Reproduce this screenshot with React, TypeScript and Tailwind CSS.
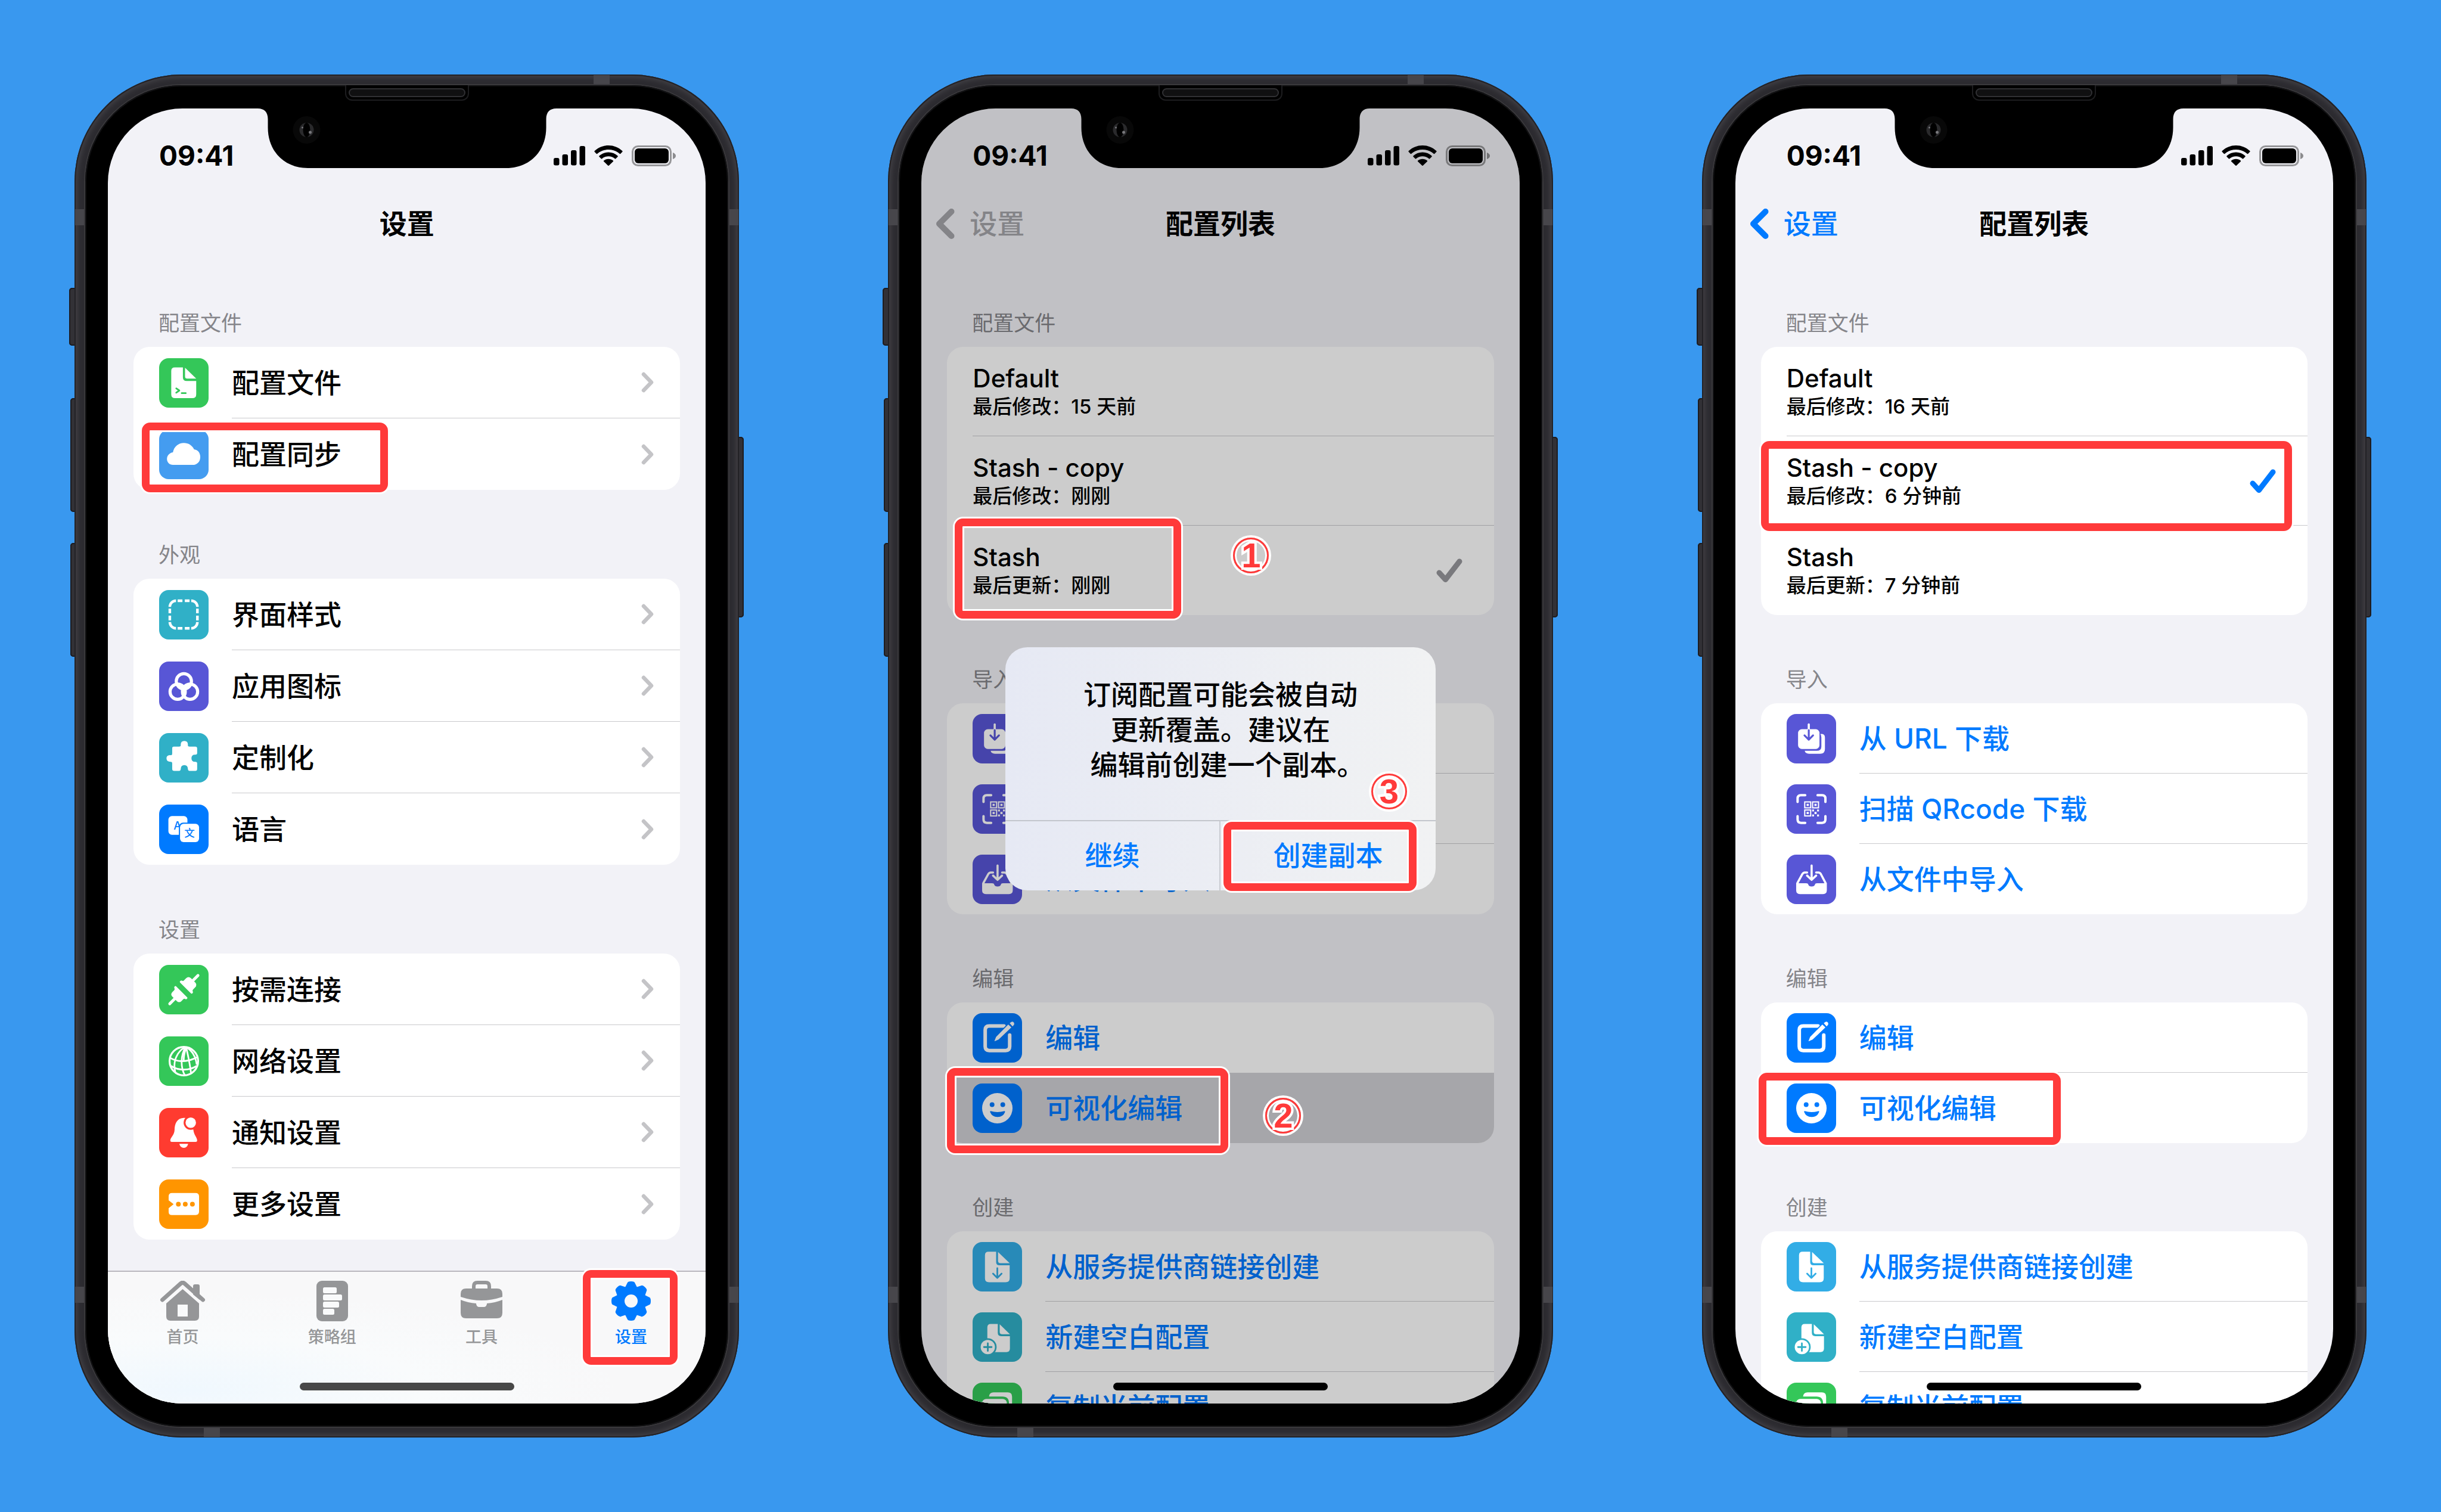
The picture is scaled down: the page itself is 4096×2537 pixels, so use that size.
import type { ReactNode } from "react";

/* ---------- glyphs drawn inside the rounded 208-unit tiles ---------- */

const glyphs: Record<string, ReactNode> = {
  file: (
    <>
      <path fill="#fff" d="M66 39H100V80Q100 96 116 96H156V152Q156 168 140 168H67Q51 168 51 152V54Q51 39 66 39Z" />
      <path fill="#fff" d="M109 40L156 86H118Q109 86 109 77Z" />
      <path stroke="#34c759" strokeWidth="7" strokeLinecap="round" strokeLinejoin="round" fill="none" d="M72 127L85 136L72 145M95 147H112" />
    </>
  ),
  cloud: (
    <path fill="#fff" d="M58 148C44 148 33 138 33 123C33 108 44 97 58 95C63 71 81 56 104 56C123 56 139 66 147 83C163 85 173 97 173 115C173 135 159 148 141 148Z" />
  ),
  dashed: (
    <path
      fill="none"
      stroke="#fff"
      strokeWidth="11"
      d="M45 71A26 26 0 0 1 71 45M135 45A26 26 0 0 1 161 71M161 135A26 26 0 0 1 135 161M71 161A26 26 0 0 1 45 135M78 45H98M108 45H128M78 161H98M108 161H128M45 78V98M45 108V128M161 78V98M161 108V128"
    />
  ),
  rings: (
    <g fill="none" stroke="#fff" strokeWidth="13">
      <circle cx="104" cy="83" r="32" />
      <circle cx="78" cy="127" r="32" />
      <circle cx="130" cy="127" r="32" />
    </g>
  ),
  puzzle: (
    <path
      fill="#fff"
      d="M62 57H84Q92 57 91 50Q90 33 106 33Q122 33 121 50Q120 57 128 57H152Q160 57 160 65V84Q160 91 153 91Q136 90 136 106Q136 122 153 121Q160 121 160 128V151Q160 159 152 159H128Q122 159 121 151Q120 135 106 135Q92 135 91 151Q90 159 84 159H64Q55 159 55 151V128Q55 120 48 121Q31 121 31 106Q31 93 48 93Q55 94 55 86V64Q55 57 62 57Z"
    />
  ),
  translate: (
    <>
      <rect x="39" y="48" width="80" height="79" rx="15" fill="#fff" />
      <text x="77" y="104" textAnchor="middle" fontSize="46" fontWeight="500" fill="#007aff" fontFamily="Inter, sans-serif">A</text>
      <rect x="83" y="76" width="90" height="87" rx="18" fill="#007aff" />
      <rect x="88" y="81" width="80" height="77" rx="15" fill="#fff" />
      <text x="128" y="136" textAnchor="middle" fontSize="44" fontWeight="500" fill="#007aff" fontFamily="'Noto Sans CJK SC', sans-serif">文</text>
    </>
  ),
  plug: (
    <g fill="#fff" transform="translate(104 104) rotate(-45)">
      <path d="M12 -36Q19 -38 21 -32Q22 -27 28 -27H40Q55 -27 55 -12V-6H84A6 6 0 0 1 84 6H55V12Q55 27 40 27H28Q22 27 21 32Q19 38 12 36Q10 35 10 32V-32Q10 -35 12 -36Z" />
      <path d="M-15 -36Q-22 -38 -24 -32Q-25 -27 -31 -27H-41Q-55 -27 -55 -12V-6H-84A6 6 0 0 0 -84 6H-55V12Q-55 27 -41 27H-31Q-25 27 -24 32Q-22 38 -15 36Q-13 35 -13 32V-32Q-13 -35 -15 -36Z" />
    </g>
  ),
  globe: (
    <g fill="none" stroke="#fff" strokeWidth="8">
      <circle cx="104" cy="104" r="60" />
      <path d="M108 46C76 64 56 104 68 150M110 46C90 84 90 130 108 163M114 46C122 84 130 116 134 154M114 46C106 70 102 90 104 104M118 47C140 62 154 84 158 118" strokeWidth="7" />
      <path d="M46 90C72 106 112 112 160 88M50 124C80 144 124 146 158 124" strokeWidth="7" />
    </g>
  ),
  bell: (
    <>
      <path fill="#fff" d="M102 42C74 44 65 68 65 92C64 116 47 124 47 137Q47 143 53 143H154Q160 143 160 137C160 124 146 114 144 92C143 66 134 40 102 42Z" />
      <circle cx="133" cy="62" r="30" fill="#ff3b30" />
      <circle cx="133" cy="62" r="22" fill="#fff" />
      <path fill="#fff" d="M85 151H122Q118 168 104 168Q89 168 85 151Z" />
    </>
  ),
  ticket: (
    <>
      <path fill="#fff" d="M54 57H153Q168 57 168 72V135Q168 150 153 150H54Q40 150 40 136V121L61 104L40 88V72Q40 57 54 57Z" />
      <g fill="#ff9500">
        <circle cx="81" cy="104" r="10" />
        <circle cx="110" cy="104" r="10" />
        <circle cx="140" cy="104" r="10" />
      </g>
    </>
  ),
  download: (
    <>
      <path fill="#fff" d="M142 84H146Q161 84 161 99V147Q161 167 141 167H94Q78 167 76 155H126Q146 155 146 137V99Q146 90 142 84Z" />
      <rect x="48" y="64" width="90" height="83" rx="16" fill="#fff" />
      <path stroke="#fff" strokeWidth="9" strokeLinecap="round" d="M93 44V66" />
      <path stroke="#5856d6" strokeWidth="8" strokeLinecap="round" strokeLinejoin="round" fill="none" d="M93 68V107M75 90L93 108L111 90" />
    </>
  ),
  qr: (
    <>
      <path fill="none" stroke="#fff" strokeWidth="10" strokeLinecap="round" d="M46 74V60Q46 46 60 46H78M130 46H149Q163 46 163 60V74M163 134V148Q163 162 149 162H130M78 162H60Q46 162 46 148V134" />
      <g fill="none" stroke="#fff" strokeWidth="5">
        <rect x="76" y="74" width="25" height="25" />
        <rect x="109" y="74" width="25" height="25" />
        <rect x="76" y="108" width="25" height="25" />
      </g>
      <g fill="#fff">
        <rect x="84" y="82" width="9" height="9" />
        <rect x="117" y="82" width="9" height="9" />
        <rect x="84" y="116" width="9" height="9" />
        <rect x="107" y="106" width="8" height="8" />
        <rect x="128" y="106" width="8" height="8" />
        <rect x="117" y="116" width="9" height="9" />
        <rect x="107" y="127" width="8" height="8" />
        <rect x="128" y="127" width="8" height="8" />
      </g>
    </>
  ),
  inbox: (
    <>
      <path fill="#fff" d="M40 120H82Q90 120 91 126Q94 134 105 134Q116 134 119 126Q120 120 128 120H169V150Q169 166 153 166H56Q40 166 40 150Z" />
      <path fill="none" stroke="#fff" strokeWidth="9" strokeLinecap="round" strokeLinejoin="round" d="M86 75H76Q70 75 66 82L45 120M124 75H134Q140 75 144 82L164 120M105 46V104M86 88L105 106L124 88" />
    </>
  ),
  edit: (
    <>
      <path fill="none" stroke="#fff" strokeWidth="15" strokeLinecap="round" d="M132 54H70Q53 54 53 71V140Q53 157 70 157H139Q156 157 156 140V92" />
      <path fill="#fff" stroke="#007aff" strokeWidth="4" d="M150 45L166 60L110 113L88 122L97 99Z" />
      <path fill="#fff" d="M156 42L163 37Q168 34 173 39Q177 44 174 49L168 56Z" />
    </>
  ),
  smile: (
    <>
      <circle cx="104" cy="104" r="64" fill="#fff" />
      <circle cx="82" cy="89" r="10" fill="#007aff" />
      <circle cx="127" cy="89" r="10" fill="#007aff" />
      <path fill="#007aff" d="M76 116Q104 124 134 116Q138 116 136 121Q128 141 105 141Q82 141 74 121Q72 116 76 116Z" />
    </>
  ),
  docDown: (
    <>
      <path fill="#fff" d="M67 41H99V84Q99 98 113 98H156V152Q156 169 139 169H69Q52 169 52 152V56Q52 41 67 41Z" />
      <path fill="#fff" d="M107 42L156 89H117Q107 89 107 79Z" />
      <path fill="none" stroke="#32ade6" strokeWidth="7" strokeLinecap="round" strokeLinejoin="round" d="M104 110V150M86 133L104 151L122 133" />
    </>
  ),
  docPlus: (
    <>
      <path fill="#fff" d="M76 49H106V86Q106 100 120 100H157V152Q157 167 142 167H76Q62 167 62 152V63Q62 49 76 49Z" />
      <path fill="#fff" d="M114 50L157 92H123Q114 92 114 83Z" />
      <circle cx="64" cy="146" r="37" fill="#30b0c7" />
      <circle cx="64" cy="146" r="30" fill="#fff" />
      <path stroke="#30b0c7" strokeWidth="7" strokeLinecap="round" d="M64 130V162M48 146H80" />
    </>
  ),
  copy: (
    <>
      <path fill="#fff" d="M69 58Q71 41 88 41H148Q166 41 166 59V125Q166 140 153 143V86Q153 58 125 58Z" />
      <rect x="40" y="68" width="104" height="100" rx="18" fill="#fff" />
    </>
  ),
};

const tiles: Record<string, string> = {
  green: "bg-[#34c759]",
  sky: "bg-[#449cf0]",
  teal: "bg-[#30b0c7]",
  indigo: "bg-[#5856d6]",
  blue: "bg-[#007aff]",
  red: "bg-[#ff3b30]",
  orange: "bg-[#ff9500]",
  cyan: "bg-[#32ade6]",
};

function Tile({ glyph, color }: { glyph: string; color: string }) {
  return (
    <span className={"block size-[83px] shrink-0 overflow-hidden rounded-[16px] " + tiles[color]}>
      <svg viewBox="0 0 208 208" className="size-full" aria-hidden="true">
        {glyphs[glyph]}
      </svg>
    </span>
  );
}

/* ---------- call-outs ---------- */

function Mark({ place }: { place: string }) {
  return (
    <span
      aria-hidden="true"
      className={
        "pointer-events-none absolute z-30 rounded-[14px] border-[13px] border-[#ff3a3a] shadow-[0_0_0_3px_#fff,inset_0_0_0_3px_#fff] " +
        place
      }
    />
  );
}

function Step({ n, place }: { n: number; place: string }) {
  return (
    <span
      className={
        "absolute z-30 flex size-[60px] items-center justify-center rounded-full border-[3px] border-[#ff3a3a] text-[58px] leading-none font-bold text-[#ff3a3a] shadow-[0_0_0_4px_#fff,inset_0_0_0_3px_#fff] [-webkit-text-stroke:8px_#fff] [paint-order:stroke_fill] font-['Liberation_Sans',sans-serif] " +
        place
      }
    >
      {n}
    </span>
  );
}

/* ---------- lists ---------- */

function Section({ title, children }: { title: string; children: ReactNode }) {
  return (
    <section>
      <h2 className="px-[42px] pb-[18px] text-[35px] leading-[44px] text-[#85858a]">{title}</h2>
      <ul className="rounded-[27px] bg-white">{children}</ul>
    </section>
  );
}

type RowProps = {
  glyph: string;
  color: string;
  label: string;
  last?: boolean;
  children?: ReactNode;
};

function SettingRow({ glyph, color, label, last, children }: RowProps) {
  return (
    <li className="relative">
      <button type="button" className="flex h-[120px] w-full items-center gap-[39px] pl-[43px] text-left">
        <Tile glyph={glyph} color={color} />
        <span
          className={
            "flex h-full flex-1 items-center justify-between pr-[44px] " + (last ? "" : "border-b border-[#c9c9cc]")
          }
        >
          <span className="text-[46px] leading-[60px] font-medium">{label}</span>
          <svg viewBox="0 0 21 35" className="h-[35px] w-[21px]" aria-hidden="true">
            <path d="M4 4L17 17.5L4 31" fill="none" stroke="#c4c4c7" strokeWidth="6.5" strokeLinecap="round" strokeLinejoin="round" />
          </svg>
        </span>
      </button>
      {children}
    </li>
  );
}

function ActionRow({ glyph, color, label, last, pressed, children }: RowProps & { pressed?: boolean }) {
  return (
    <li className="relative">
      <button
        type="button"
        className={
          "flex h-[118px] w-full items-center gap-[39px] pl-[43px] text-left " +
          (pressed ? "rounded-b-[27px] bg-[#d0d0d5]" : "")
        }
      >
        <Tile glyph={glyph} color={color} />
        <span className={"flex h-full flex-1 items-center " + (last ? "" : "border-b border-[#c9c9cc]")}>
          <span className="text-[46px] leading-[60px] font-medium text-[#007aff]">{label}</span>
        </span>
      </button>
      {children}
    </li>
  );
}

type ProfileProps = { name: string; note: string; check?: string; last?: boolean; children?: ReactNode };

function ProfileRow({ name, note, check, last, children }: ProfileProps) {
  return (
    <li className="relative">
      <button type="button" className="block h-[150px] w-full pl-[43px] text-left">
        <span
          className={
            "flex h-full items-center justify-between pr-[53px] " + (last ? "" : "border-b border-[#c9c9cc]")
          }
        >
          <span className="block pb-[4px]">
            <span className="block text-[42px] leading-[54px] font-medium">{name}</span>
            <span className="block text-[33px] leading-[40px] font-medium">{note}</span>
          </span>
          {check && (
            <svg viewBox="0 0 44 42" className="h-[42px] w-[44px]" aria-label="已选择">
              <path d="M5 25L15.5 36.5L39 6" fill="none" stroke={check} strokeWidth="9" strokeLinecap="round" strokeLinejoin="round" />
            </svg>
          )}
        </span>
      </button>
      {children}
    </li>
  );
}

/* ---------- phone ---------- */

function StatusBar() {
  return (
    <div className="flex h-[158px] shrink-0 items-center justify-between pr-[50px] pl-[86px]">
      <span className="text-[46px] leading-[54px] font-bold">09:41</span>
      <span className="flex items-center gap-[15px]">
        <svg viewBox="0 0 53 34" className="h-[34px] w-[53px]" aria-hidden="true">
          <rect x="0" y="21" width="9.500" height="12.500" rx="3" />
          <rect x="14.500" y="15" width="9.500" height="18.500" rx="3" />
          <rect x="29" y="8" width="9.500" height="25.500" rx="3" />
          <rect x="43.500" y="1" width="9.500" height="32.500" rx="3" />
        </svg>
        <svg viewBox="0 0 48 34" className="h-[34px] w-[48px]" aria-hidden="true">
          <path d="M24 0C33 0 41 3.400 47.300 9.200Q48 10 47.300 10.800L44.200 14Q43.500 14.600 42.800 14C37.500 9.300 31 7 24 7S10.500 9.300 5.200 14Q4.500 14.600 3.800 14L0.700 10.800Q0 10 0.700 9.200C7 3.400 15 0 24 0Z" />
          <path d="M24 11.500C30 11.500 35.300 13.700 39.500 17.500Q40.200 18.200 39.500 19L36.200 22.200Q35.500 22.800 34.800 22.200C31.800 19.700 28 18.300 24 18.300S16.200 19.700 13.200 22.200Q12.500 22.800 11.800 22.200L8.500 19Q7.800 18.200 8.500 17.500C12.700 13.700 18 11.500 24 11.500Z" />
          <path d="M24 22.700C27 22.700 29.600 23.700 31.800 25.500Q32.500 26.200 31.800 27L24.800 33.700Q24 34.300 23.200 33.700L16.200 27Q15.500 26.200 16.200 25.500C18.400 23.700 21 22.700 24 22.700Z" />
        </svg>
        <svg viewBox="0 0 74 35" className="h-[35px] w-[74px]" aria-hidden="true">
          <rect x="1.500" y="1.500" width="64" height="32" rx="9" fill="none" stroke="#000" strokeOpacity=".38" strokeWidth="3" />
          <rect x="5" y="5" width="57" height="25" rx="6" />
          <path d="M69 12Q74 14 74 17.500T69 23Z" fillOpacity=".42" />
        </svg>
      </span>
    </div>
  );
}

function NavBar({ title, back }: { title: string; back?: string }) {
  return (
    <header className="grid h-[70px] shrink-0 grid-cols-[1fr_auto_1fr] items-center px-[23px]">
      {back ? (
        <a href="#settings" className={"flex items-center gap-[24px] " + back}>
          <svg viewBox="0 0 34 53" className="h-[53px] w-[34px]" aria-hidden="true">
            <path d="M27.500 6L7 26.500L27.500 47" fill="none" stroke="currentColor" strokeWidth="10" strokeLinecap="round" strokeLinejoin="round" />
          </svg>
          <span className="text-[46px] leading-[60px] font-medium">设置</span>
        </a>
      ) : (
        <span />
      )}
      <h1 className="text-[46px] leading-[60px] font-bold">{title}</h1>
    </header>
  );
}

const band = "absolute bg-[#47464b]";
const key = "absolute bg-[#323136] shadow-[inset_0_0_0_2px_#1d1c20]";

function Phone({ children, indicator }: { children: ReactNode; indicator: string }) {
  return (
    <article className="px-[125px]">
      <div className="relative">
        <span className={key + " top-[358px] -left-[9px] h-[97px] w-[14px] rounded-l-[5px]"} />
        <span className={key + " top-[543px] -left-[7px] h-[191px] w-[12px] rounded-l-[5px]"} />
        <span className={key + " top-[786px] -left-[7px] h-[191px] w-[12px] rounded-l-[5px]"} />
        <span className={key + " top-[608px] -right-[8px] h-[303px] w-[12px] rounded-r-[5px]"} />

        <div className="relative rounded-[180px] bg-[#2c2b30] p-[18px] shadow-[inset_0_0_0_2px_#232226,inset_0_0_9px_5px_#424146]">
          <span className={band + " top-[1px] right-[217px] h-[18px] w-[27px]"} />
          <span className={band + " bottom-[1px] left-[217px] h-[18px] w-[27px]"} />
          <span className={band + " top-[226px] left-[1px] h-[27px] w-[18px]"} />
          <span className={band + " top-[226px] right-[1px] h-[27px] w-[18px]"} />
          <span className={band + " bottom-[226px] left-[1px] h-[27px] w-[18px]"} />
          <span className={band + " right-[1px] bottom-[226px] h-[27px] w-[18px]"} />

          <div className="relative rounded-[162px] bg-black px-[38px] py-[39px] shadow-[0_0_0_2px_#3a393c,inset_0_0_0_2px_#111113]">
            <span className="absolute top-0 left-1/2 z-50 flex h-[26px] w-[208px] -translate-x-1/2 items-center justify-center rounded-b-[12px] border-2 border-t-0 border-[#1d1d1f] bg-black">
              <span className="h-[15px] w-[196px] rounded-full border-2 border-[#303033] bg-[#101011]" />
            </span>

            <div className="relative isolate flex aspect-[1125/2436] flex-col overflow-hidden rounded-[125px] bg-[#f2f2f7] text-black">
              {children}
              <svg viewBox="0 0 501 100" className="absolute top-0 left-1/2 z-40 h-[100px] w-[501px] -translate-x-1/2" aria-hidden="true">
                <path d="M0 0C11 0 17 6 17 18V32C17 72 45 100 84 100H417C456 100 484 72 484 32V18C484 6 490 0 501 0Z" />
                <circle cx="82" cy="36" r="23" fill="#080808" />
                <circle cx="82" cy="36" r="12" fill="#2a2a2c" />
                <ellipse cx="82" cy="36" rx="6" ry="12" fill="#000" />
                <circle cx="88" cy="40" r="2.500" fill="#77777b" />
                <circle cx="75" cy="32" r="1.500" fill="#77777b" />
              </svg>
              <span className={"absolute bottom-[22px] left-1/2 z-20 h-[13px] w-[360px] -translate-x-1/2 rounded-full " + indicator} />
            </div>
          </div>
        </div>
      </div>
    </article>
  );
}

/* ---------- tab bar ---------- */

const tabGlyphs: Record<string, ReactNode> = {
  home: (
    <svg viewBox="0 0 77 68" className="h-[68px] w-[77px]" fill="currentColor" aria-hidden="true">
      <path d="M56 23V9Q56 6 59 6H64Q67 6 67 9V32Z" />
      <path d="M4.500 32L35.500 4.500Q38.500 2 41.500 4.500L72.500 32" fill="none" stroke="currentColor" strokeWidth="7" strokeLinecap="round" />
      <path fillRule="evenodd" d="M38.500 14L66 38V60Q66 67 59 67H18Q11 67 11 60V38ZM30 40V60H47V40Z" />
    </svg>
  ),
  group: (
    <svg viewBox="0 0 53 68" className="h-[68px] w-[53px]" aria-hidden="true">
      <rect width="53" height="68" rx="9" fill="currentColor" />
      <g fill="#f9fafb">
        <rect x="11" y="11" width="23" height="10" rx="2.500" />
        <rect x="11" y="23" width="32" height="10" rx="2.500" />
        <rect x="11" y="35" width="27" height="10" rx="2.500" />
        <rect x="11" y="47" width="19" height="10" rx="2.500" />
      </g>
    </svg>
  ),
  tools: (
    <svg viewBox="0 0 70 68" className="h-[68px] w-[70px]" fill="currentColor" aria-hidden="true">
      <path d="M22 15V9Q22 3 28 3H42Q48 3 48 9V15" fill="none" stroke="currentColor" strokeWidth="6" />
      <path d="M9 13H61Q70 13 70 22V27Q52 33 35 33T0 27V22Q0 13 9 13Z" />
      <path d="M0 32Q12 37 26 38V39Q27 44 31 44H39Q43 44 44 39V38Q58 37 70 32V54Q70 63 61 63H9Q0 63 0 54Z" />
    </svg>
  ),
  gear: (
    <svg viewBox="-34 -34 68 68" className="size-[68px]" fill="currentColor" aria-hidden="true">
      {[0, 45, 90, 135, 180, 225, 270, 315].map((a) => (
        <path key={a} transform={`rotate(${a})`} d="M-10.500 -22L-6.500 -30Q-6 -33 0 -33T6.500 -30L10.500 -22Z" />
      ))}
      <circle r="18" fill="none" stroke="currentColor" strokeWidth="14" />
    </svg>
  ),
};

const tabs = [
  { id: "home", label: "首页" },
  { id: "group", label: "策略组" },
  { id: "tools", label: "工具" },
  { id: "gear", label: "设置" },
];

function TabBar() {
  return (
    <nav className="grid shrink-0 grid-cols-4 border-t-2 border-[#b9b7be] bg-[#f8f8f9] bg-[radial-gradient(ellipse_at_14%_90%,#f0f8fe_0%,#f9fbfc_32%,transparent_60%)]">
      {tabs.map((t) => (
        <a
          key={t.id}
          href={"#" + t.id}
          className={
            "relative flex flex-col items-center gap-[9px] pt-[15px] pb-[93px] " +
            (t.id === "gear" ? "text-[#007aff]" : "text-[#959698]")
          }
        >
          {tabGlyphs[t.id]}
          <span className="text-[27px] leading-[36px] font-medium">{t.label}</span>
          {t.id === "gear" && <Mark place="-top-[3px] left-[45px] size-[159px]" />}
        </a>
      ))}
    </nav>
  );
}

/* ---------- shared profile screen ---------- */

type ProfilesProps = {
  back: string;
  profiles: ReactNode;
  pressed?: boolean;
  visualMark: ReactNode;
};

function ProfilesScreen({ back, profiles, pressed, visualMark }: ProfilesProps) {
  return (
    <>
      <StatusBar />
      <NavBar title="配置列表" back={back} />
      <main className="flex shrink-0 flex-col gap-[86px] px-[43px] pt-[110px]">
        <Section title="配置文件">{profiles}</Section>
        <Section title="导入">
          <ActionRow glyph="download" color="indigo" label="从 URL 下载" />
          <ActionRow glyph="qr" color="indigo" label="扫描 QRcode 下载" />
          <ActionRow glyph="inbox" color="indigo" label="从文件中导入" last />
        </Section>
        <Section title="编辑">
          <ActionRow glyph="edit" color="blue" label="编辑" last={pressed} />
          <ActionRow glyph="smile" color="blue" label="可视化编辑" last pressed={pressed}>
            {visualMark}
          </ActionRow>
        </Section>
        <Section title="创建">
          <ActionRow glyph="docDown" color="cyan" label="从服务提供商链接创建" />
          <ActionRow glyph="docPlus" color="teal" label="新建空白配置" />
          <ActionRow glyph="copy" color="green" label="复制当前配置" last />
        </Section>
      </main>
    </>
  );
}

function CopyDialog() {
  return (
    <div className="absolute inset-0 z-20 flex items-center justify-center bg-black/20 pt-[42px]">
      <div
        role="dialog"
        aria-label="创建副本"
        className="w-[72%] rounded-[37px] bg-linear-to-r from-[#e6e9f4] to-[#f1f2f3] text-[46px] leading-[59px] font-medium"
      >
        <div className="relative pt-[50px] pb-[63px] text-center">
          <p>订阅配置可能会被自动</p>
          <p>更新覆盖。建议在</p>
          <p>
            编辑前创建一个副本<span className="[font-feature-settings:'halt']">。</span>
          </p>
          <Step n={3} place="top-[212px] left-[614px]" />
        </div>
        <div className="grid grid-cols-2 border-t-2 border-[#c3c6cc] text-[#007aff]">
          <button type="button" className="h-[116px] border-r-2 border-[#c9ccd2]">
            继续
          </button>
          <button type="button" className="relative h-[116px]">
            创建副本
            <Mark place="top-[1px] left-[5px] h-[116px] w-[324px]" />
          </button>
        </div>
      </div>
    </div>
  );
}

export default function App() {
  return (
    <div className="grid min-h-screen grid-cols-3 items-center bg-[#3998ef] font-['Inter','Noto_Sans_CJK_SC',sans-serif]">
      <Phone indicator="bg-[#484848]">
        <StatusBar />
        <NavBar title="设置" />
        <main className="flex flex-1 flex-col gap-[87px] px-[43px] pt-[110px]">
          <Section title="配置文件">
            <SettingRow glyph="file" color="green" label="配置文件" />
            <SettingRow glyph="cloud" color="sky" label="配置同步" last>
              <Mark place="top-[7px] left-[14px] h-[117px] w-[413px]" />
            </SettingRow>
          </Section>
          <Section title="外观">
            <SettingRow glyph="dashed" color="teal" label="界面样式" />
            <SettingRow glyph="rings" color="indigo" label="应用图标" />
            <SettingRow glyph="puzzle" color="teal" label="定制化" />
            <SettingRow glyph="translate" color="blue" label="语言" last />
          </Section>
          <Section title="设置">
            <SettingRow glyph="plug" color="green" label="按需连接" />
            <SettingRow glyph="globe" color="green" label="网络设置" />
            <SettingRow glyph="bell" color="red" label="通知设置" />
            <SettingRow glyph="ticket" color="orange" label="更多设置" last />
          </Section>
        </main>
        <TabBar />
      </Phone>

      <Phone indicator="bg-black">
        <ProfilesScreen
          back="text-[#a5a5aa]"
          pressed
          profiles={
            <>
              <ProfileRow name="Default" note="最后修改：15 天前" />
              <ProfileRow name="Stash - copy" note="最后修改：刚刚" />
              <ProfileRow name="Stash" note="最后更新：刚刚" check="#98989d" last>
                <Mark place="-top-[12px] left-[13px] h-[168px] w-[380px]" />
                <Step n={1} place="top-[20px] left-[480px]" />
              </ProfileRow>
            </>
          }
          visualMark={
            <>
              <Mark place="-top-[8px] left-0 h-[143px] w-[472px]" />
              <Step n={2} place="top-[42px] left-[534px]" />
            </>
          }
        />
        <CopyDialog />
      </Phone>

      <Phone indicator="bg-black">
        <ProfilesScreen
          back="text-[#007aff]"
          profiles={
            <>
              <ProfileRow name="Default" note="最后修改：16 天前" />
              <ProfileRow name="Stash - copy" note="最后修改：6 分钟前" check="#007aff">
                <Mark place="top-[8px] left-0 h-[151px] w-[891px]" />
              </ProfileRow>
              <ProfileRow name="Stash" note="最后更新：7 分钟前" last />
            </>
          }
          visualMark={<Mark place="top-0 -left-[4px] h-[121px] w-[507px]" />}
        />
      </Phone>
    </div>
  );
}
